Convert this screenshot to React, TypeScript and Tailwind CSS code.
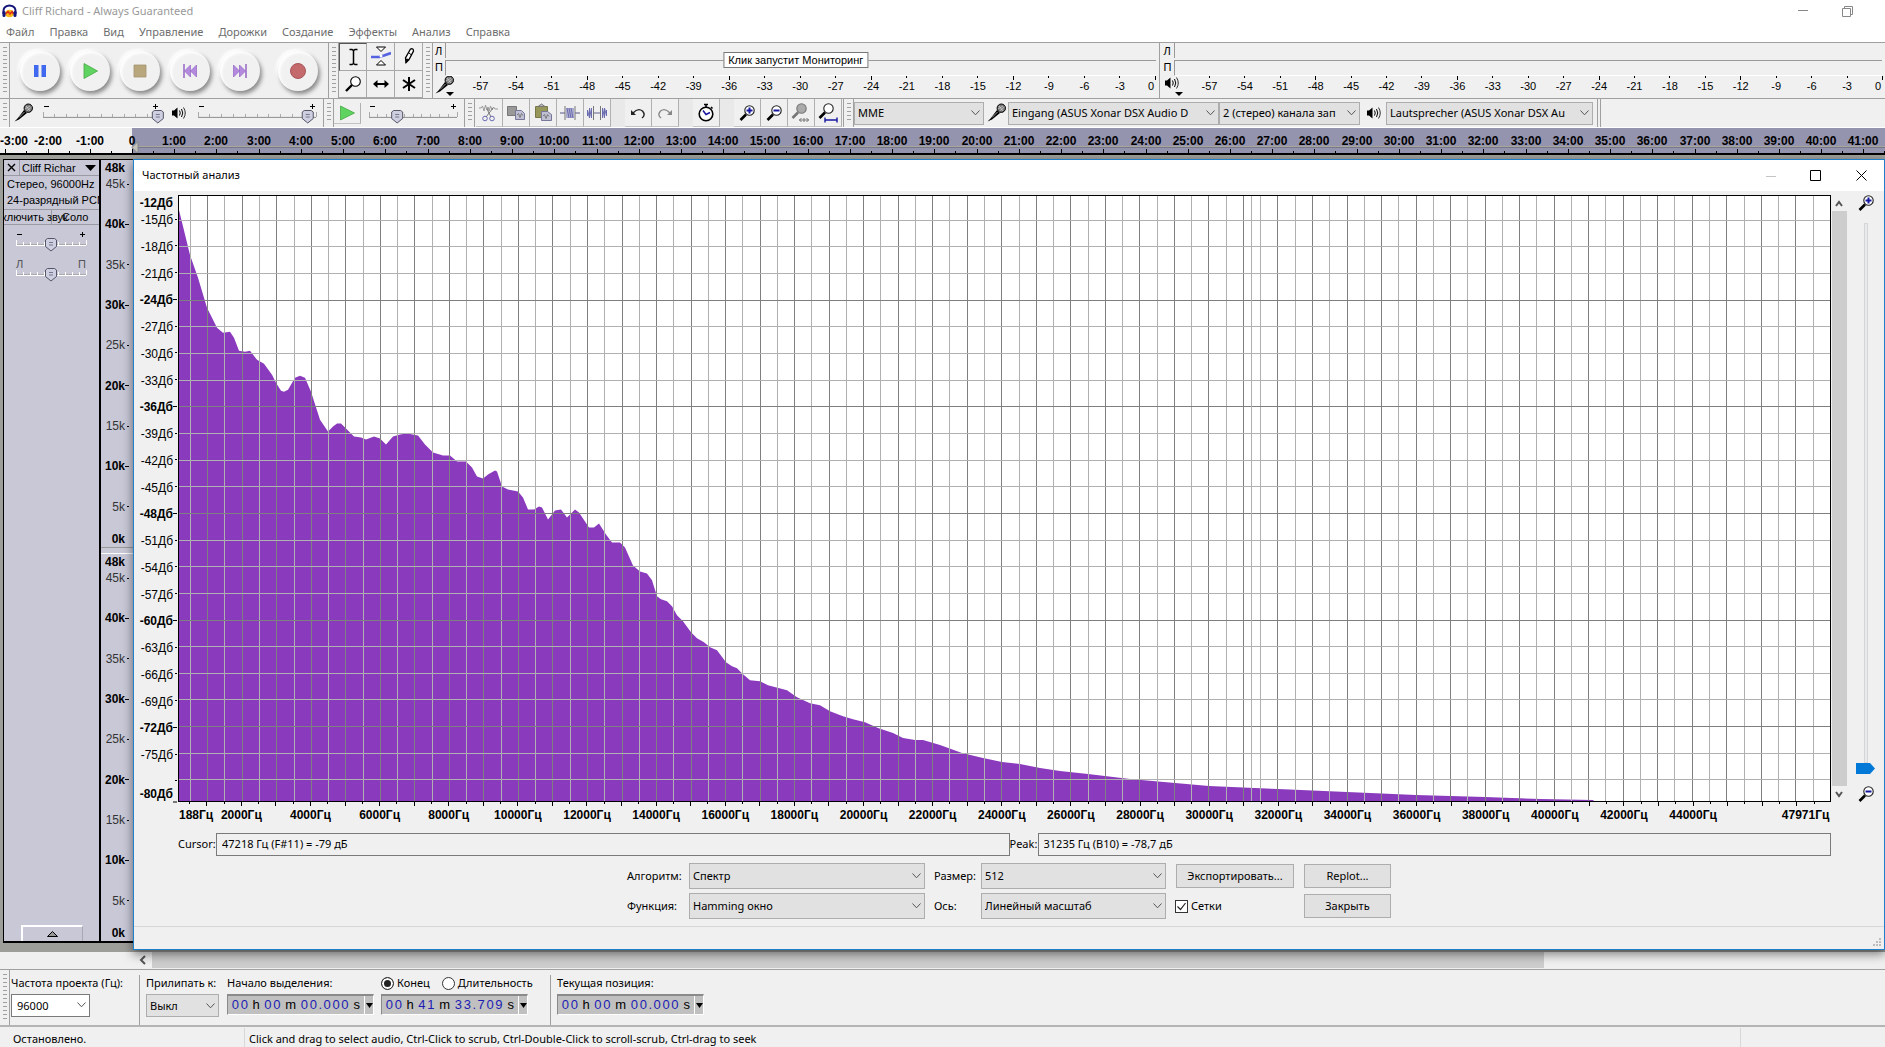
import React from "react";
import type { ReactNode } from "react";
import clsx from "clsx";

const FREQ_MIN = 168;
const FREQ_MAX = 47990;
const DB_TOP = -12.28;
const DB_RANGE = 68.09;

const freqPos = (f: number) =>
  `${(((f - FREQ_MIN) / (FREQ_MAX - FREQ_MIN)) * 100).toFixed(3)}%`;
const dbPos = (d: number) => `${(((DB_TOP - d) / DB_RANGE) * 100).toFixed(3)}%`;

const range = (from: number, to: number, step: number) => {
  const out: number[] = [];
  for (let v = from; v <= to; v += step) out.push(v);
  return out;
};

// Spectrum outline on a 1651 x 606 plot
const spectrum =
  "0,14 11,59 19,82 28,112 38,132 44,137 51,136 55,142 60,155 66,156 71,155 78,164 85,168 93,179 97,187 102,195 105,196 109,194 116,182 121,180 126,182 132,196 141,224 149,236 154,231 158,228 162,228 168,234 175,241 182,242 187,244 195,241 201,243 207,249 214,241 221,239 228,238 239,240 246,249 254,257 264,260 271,260 278,266 287,266 293,272 298,281 304,283 309,279 316,275 318,276 323,291 329,294 339,296 344,302 349,314 355,314 360,311 363,312 369,324 376,315 382,314 388,322 396,314 400,317 406,326 410,332 415,332 420,328 427,339 433,347 441,347 446,352 454,370 461,376 468,378 473,385 478,401 482,404 488,406 493,411 498,420 504,426 512,437 518,443 525,447 531,452 538,455 547,467 553,471 558,473 564,479 571,485 581,486 589,490 608,495 618,502 631,508 641,510 651,516 664,521 674,524 686,527 699,533 714,538 724,543 736,545 744,545 761,550 783,558 804,563 823,567 841,569 861,573 881,576 909,579 951,584 1030,591 1099,594 1168,597 1237,600 1306,602 1362,604 1414,605 1415,606";

const menuItems = [
  "Файл",
  "Правка",
  "Вид",
  "Управление",
  "Дорожки",
  "Создание",
  "Эффекты",
  "Анализ",
  "Справка",
];

const Grabber = () => (
  <div className="flex w-2.5 shrink-0 border-r border-[#a0a0a0] bg-[#f0f0f0] py-1 pl-[3px]">
    <div className="w-1 bg-[repeating-linear-gradient(#a0a0a0_0_1px,transparent_1px_4px)]" />
  </div>
);

const MicIcon = () => (
  <svg width="20" height="20" viewBox="0 0 20 20" className="shrink-0">
    <path d="M0.5 18.5 L3.5 15.5 L10 7 L13 10 L5 16.5 Z" fill="#000" />
    <path d="M5 14.5 L10.5 9" stroke="#999" strokeWidth="1" />
    <circle cx="14.3" cy="5.2" r="4.2" fill="#777" stroke="#000" />
    <path d="M11 6 l5 -3 M12.5 8 l5 -4 M12 3 l4 5" stroke="#ddd" strokeWidth="0.7" />
  </svg>
);

const SpeakerIcon = () => (
  <svg width="16" height="16" viewBox="0 0 16 16" className="shrink-0">
    <path d="M1 5.5 H3 L6.5 2.5 V13.5 L3 10.5 H1 Z" fill="#000" />
    <g fill="none" stroke="#000">
      <path d="M8.5 5.5 Q10 8 8.5 10.5" />
      <path d="M10.5 4 Q13 8 10.5 12" />
      <path d="M12.5 2.5 Q16 8 12.5 13.5" strokeWidth="0.8" />
    </g>
  </svg>
);

const ZoomGlyph = ({ sign, muted }: { sign?: "+" | "-"; muted?: boolean }) => (
  <g>
    <path d="M1.5 15 L7 9.5" stroke={muted ? "#777" : "#000"} strokeWidth="2.6" />
    <circle
      cx="10.5"
      cy="5.5"
      r="4.7"
      fill={muted ? "#aaa" : "#fff"}
      stroke={muted ? "#777" : "#222"}
      strokeWidth="1.1"
    />
    {sign && <path d="M7.5 5.5 H13.5" stroke="#1717a0" strokeWidth="2" />}
    {sign === "+" && <path d="M10.5 2.5 V8.5" stroke="#1717a0" strokeWidth="2" />}
  </g>
);

type SliderProps = {
  label: string;
  value: number;
  left?: string;
  right?: string;
  light?: boolean;
  className: string;
};

const Slider = ({ label, value, left, right, light, className }: SliderProps) => (
  <label className={clsx("relative block h-6 shrink-0", className)}>
    <svg className="block h-full w-full overflow-visible" shapeRendering="crispEdges">
      {left ? (
        <text x="0" y="9" className="fill-[#555] text-[11px]">
          {left}
        </text>
      ) : (
        <path d="M1 5.5 h5" stroke="#000" />
      )}
      {right ? (
        <text x="100%" y="9" textAnchor="end" className="fill-[#555] text-[11px]">
          {right}
        </text>
      ) : (
        <svg x="100%" className="overflow-visible">
          <path d="M-6 5.5 h5 M-3.5 3 v5" stroke="#000" />
        </svg>
      )}
      <line x1="0" x2="100%" y1="16.5" y2="16.5" stroke={light ? "#fff" : "#999"} />
      <line x1="0" x2="100%" y1="15.5" y2="15.5" stroke={light ? "#aaa" : "#e4e4e4"} />
      {range(0, 100, 10).map((t) => (
        <line
          key={t}
          x1={`${t}%`}
          x2={`${t}%`}
          y1={t % 100 ? 13 : 11}
          y2="16"
          stroke={light ? "#fff" : "#aaa"}
        />
      ))}
      <svg x={`${value}%`} className="overflow-visible" shapeRendering="auto">
        <path
          d="M-5.5 11 L-3.5 9.5 H3.5 L5.5 11 V17.5 L0 22 L-5.5 17.5 Z"
          fill="#cfcfe2"
          stroke="#555566"
        />
        <path d="M-2 13.5 h4 M-2 16 h4" stroke="#77778c" />
      </svg>
    </svg>
    <input
      type="range"
      aria-label={label}
      defaultValue={value}
      className="absolute inset-0 w-full opacity-0"
    />
  </label>
);

type SelectProps = {
  id?: string;
  label?: string;
  value: string;
  className?: string;
};

const Select = ({ id, label, value, className }: SelectProps) => (
  <div className={clsx("relative flex shrink-0", className)}>
    <select
      id={id}
      aria-label={label}
      className="w-full appearance-none truncate border border-[#adadad] bg-[#e1e1e1] pr-5 pl-[3px] text-black"
    >
      <option>{value}</option>
    </select>
    <svg
      width="9"
      height="6"
      className="pointer-events-none absolute top-1/2 right-1 -translate-y-1/2"
    >
      <path d="M0.5 0.5 L4.5 4.8 L8.5 0.5" fill="none" stroke="#555" />
    </svg>
  </div>
);

const RoundButton = ({ label, children }: { label: string; children: ReactNode }) => (
  <button aria-label={label} className="flex w-[50px] items-center justify-center">
    <span className="flex size-10 items-center justify-center rounded-full bg-[#f1f1f1] shadow-[2px_3px_4px_#8a8a8a,-2px_-2px_3px_#fff,inset_2px_2px_3px_#fff]">
      <svg width="18" height="18" viewBox="0 0 18 18">
        {children}
      </svg>
    </span>
  </button>
);

const ToolButton = ({
  label,
  children,
  pressed,
}: {
  label: string;
  children: ReactNode;
  pressed?: boolean;
}) => (
  <button
    aria-label={label}
    className={clsx(
      "flex items-center justify-center border-r border-b border-[#a8a8a8]",
      pressed && "border-t border-l border-t-[#555] border-l-[#555]"
    )}
  >
    <svg width="20" height="20" viewBox="0 0 20 20" fill="none">
      {children}
    </svg>
  </button>
);

const EditButton = ({ label, children }: { label: string; children: ReactNode }) => (
  <button
    aria-label={label}
    className="flex w-[27px] items-center justify-center border-r border-b border-[#b0b0b0] border-b-[#c4c4c4]"
  >
    <svg width="20" height="20" viewBox="0 0 20 20" fill="none">
      {children}
    </svg>
  </button>
);

const Transport = () => (
  <div className="flex shrink-0 border-r border-[#a0a0a0] px-[5px]">
    <RoundButton label="Пауза">
      <path d="M3 3 h4.5 v12 H3 Z M10.5 3 H15 v12 h-4.5 Z" fill="#4169f0" />
    </RoundButton>
    <RoundButton label="Воспроизвести">
      <path d="M3 1.5 L16.5 9 L3 16.5 Z" fill="#5fd35f" stroke="#46a846" strokeWidth="0.8" />
    </RoundButton>
    <RoundButton label="Стоп">
      <path d="M3 3 H15 V15 H3 Z" fill="#b8a67c" stroke="#a3946f" strokeWidth="0.8" />
    </RoundButton>
    <RoundButton label="В начало">
      <path d="M3 2 V16" stroke="#8e5cc0" strokeWidth="1.4" />
      <path
        d="M9.5 3 V15 L3.5 9 Z M15.5 3 V15 L9.5 9 Z"
        fill="#b48ade"
        stroke="#9465c4"
        strokeWidth="0.7"
      />
    </RoundButton>
    <RoundButton label="В конец">
      <path d="M15 2 V16" stroke="#8e5cc0" strokeWidth="1.4" />
      <path
        d="M2.5 3 V15 L8.5 9 Z M8.5 3 V15 L14.5 9 Z"
        fill="#b48ade"
        stroke="#9465c4"
        strokeWidth="0.7"
      />
    </RoundButton>
    <div className="w-2" />
    <RoundButton label="Запись">
      <circle cx="9" cy="9" r="7.5" fill="#c4696c" stroke="#a85558" />
    </RoundButton>
  </div>
);

const Tools = () => (
  <div className="grid w-[84px] shrink-0 grid-cols-3 grid-rows-2">
    <ToolButton label="Выделение" pressed>
      <path
        d="M6.5 2.5 H9 L10.5 3.5 L12 2.5 H14.5 M10.5 3.5 V16.5 M6.5 17.5 H9 L10.5 16.5 L12 17.5 H14.5"
        stroke="#000"
        strokeWidth="1.5"
      />
    </ToolButton>
    <ToolButton label="Изменение огибающей">
      <path d="M5.5 1 H14.5 L10 5.5 Z M5.5 19 H14.5 L10 14.5 Z" fill="#fff" stroke="#000" />
      <path d="M0 11 H8 L13 9.5 L20 7" stroke="#5563e0" strokeWidth="2.6" />
      <circle cx="10" cy="10" r="1.5" fill="#fff" />
    </ToolButton>
    <ToolButton label="Рисование">
      <path
        d="M7 16.5 L6.5 12 L11.5 3 Q14.5 2 14.5 5 L10 13.5 Z"
        fill="#fff"
        stroke="#000"
        strokeWidth="1.3"
      />
      <path d="M7 16.5 L7.5 13 L9.5 13.5 Z M10 7 L12.5 9" fill="#000" stroke="#000" />
    </ToolButton>
    <ToolButton label="Масштабирование">
      <path d="M3 17 L9 11" stroke="#000" strokeWidth="2.4" />
      <circle cx="12.5" cy="7.5" r="4.8" fill="#fff" stroke="#000" strokeWidth="1.1" />
    </ToolButton>
    <ToolButton label="Перемещение">
      <path d="M4 10 H16" stroke="#000" strokeWidth="2" />
      <path d="M2 10 L6.5 6 V14 Z M18 10 L13.5 6 V14 Z" fill="#000" />
    </ToolButton>
    <ToolButton label="Многоинструментальный режим">
      <path d="M10 3 V17 M4 6 L16 14 M16 6 L4 14" stroke="#000" strokeWidth="2" />
    </ToolButton>
  </div>
);

const Meter = ({ playback, tip }: { playback?: boolean; tip?: string }) => (
  <div
    className={clsx(
      "relative flex flex-1 pr-[3px] text-[11px]",
      playback && "border-l border-[#a0a0a0]"
    )}
  >
    <div className={clsx("shrink-0 leading-4", playback ? "w-3.5 pl-1" : "w-3 pl-0.5")}>
      <div>Л</div>
      <div>П</div>
      <div className="flex">{playback ? <SpeakerIcon /> : <MicIcon />}</div>
    </div>
    <div className="flex flex-1 flex-col">
      <div className="h-[15px] border-l border-[#999]" />
      <div className="mt-0.5 h-4 border-t border-b border-l border-[#999] border-b-white" />
      <svg className="h-[22px] w-full overflow-visible">
        <path d="M1 16 h8 l-4 4 Z" fill="#000" />
        {range(1, 20, 1).map((i) => (
          <g key={i}>
            <line
              x1={`${i * 5}%`}
              x2={`${i * 5}%`}
              y1="0"
              y2={i % 4 ? 2 : 4}
              stroke="#000"
              shapeRendering="crispEdges"
            />
            <text
              x={i === 20 ? "99.8%" : `${i * 5}%`}
              y="14"
              textAnchor={i === 20 ? "end" : "middle"}
              className="text-[11px]"
            >
              {i * 3 - 60}
            </text>
          </g>
        ))}
      </svg>
    </div>
    {tip && (
      <div
        role="tooltip"
        className="absolute top-[9px] left-1/2 -translate-x-1/2 border border-[#777] bg-white px-1 text-[11px] leading-[14px] whitespace-nowrap"
      >
        {tip}
      </div>
    )}
  </div>
);

const EditTools = () => (
  <div className="flex shrink-0 border-r border-[#a0a0a0] px-px">
    <EditButton label="Вырезать">
      <path
        d="M0 5 h2 l1.5 -2 1.5 5 1.5 -6 1.5 5 1 -3 1 4 1.5 -5 1.5 4 1.5 -3 1.5 2 h3"
        stroke="#999"
      />
      <path d="M14 5 L7 14 M8 6 L12 14" stroke="#777" />
      <circle cx="6" cy="15.5" r="2.3" stroke="#6b6bb0" />
      <circle cx="13" cy="15.5" r="2.3" stroke="#6b6bb0" />
    </EditButton>
    <EditButton label="Копировать">
      <path d="M1.5 3.5 h9 v9 h-9 Z" fill="#999" stroke="#777" />
      <path d="M9.5 7.5 h6 l3 3 v6 h-9 Z" fill="#c0c0d4" stroke="#77779a" />
      <path d="M11 12 l1.5 -1.5 1.5 4 1.5 -4 1.5 2" stroke="#777" />
    </EditButton>
    <EditButton label="Вставить">
      <path d="M2.5 3.5 h12 v11 h-12 Z" fill="#97975a" stroke="#77774a" />
      <path d="M5 3.5 L8.5 1 L12 3.5 Z" fill="#bbb" stroke="#777" />
      <path d="M8.5 8.5 h6 l4 3 v6 h-10 Z" fill="#c0c0d4" stroke="#77779a" />
      <path d="M10 13 l1.5 -1.5 1.5 4 1.5 -4 1.5 2" stroke="#777" />
    </EditButton>
    <EditButton label="Обрезать">
      <path d="M0 10 H5 M15 10 H20" stroke="#8888aa" strokeWidth="1.4" />
      <path d="M5 3 V17 M15 3 V17" stroke="#777" />
      <path d="M7 15 V5 L9 15 V5 L11 15 V5 L13 15 V5" stroke="#6b6bb0" />
    </EditButton>
    <EditButton label="Тишина">
      <path d="M7 10 H13" stroke="#8888aa" strokeWidth="1.4" />
      <path d="M6.5 3 V17 M13.5 3 V17" stroke="#777" />
      <path
        d="M0.5 13 V7 L2.5 15 V5 L4.5 15 V5 M15.5 15 V5 L17.5 15 V5 L19.5 13 V7"
        stroke="#6b6bb0"
      />
    </EditButton>
    <div className="w-3.5 bg-[#e9e9e9]" />
    <EditButton label="Отменить">
      <path d="M5 10 Q10 4.5 14.5 8 Q18 12 14 15" stroke="#222" strokeWidth="1.4" />
      <path d="M3 7 V12 H8 Z" fill="#222" />
    </EditButton>
    <EditButton label="Повторить">
      <path d="M15 10 Q10 4.5 5.5 8 Q2 12 6 15" stroke="#888" strokeWidth="1.4" />
      <path d="M17 7 V12 H12 Z" fill="#888" />
    </EditButton>
    <div className="w-3.5 bg-[#e9e9e9]" />
    <EditButton label="Синхронизация">
      <circle cx="10" cy="11" r="6.8" fill="#fff" stroke="#000" strokeWidth="1.6" />
      <path d="M8 1.5 H12 M10 1.5 V4 M15 4 L16.5 5.5" stroke="#000" strokeWidth="1.6" />
      <path d="M7 7.5 L10 11.5 L14 9.5" stroke="#1717a0" strokeWidth="1.5" />
    </EditButton>
    <div className="w-3.5 bg-[#e9e9e9]" />
    <EditButton label="Приблизить">
      <g transform="translate(2 2)">
        <ZoomGlyph sign="+" />
      </g>
    </EditButton>
    <EditButton label="Отдалить">
      <g transform="translate(2 2)">
        <ZoomGlyph sign="-" />
      </g>
    </EditButton>
    <EditButton label="По выделению">
      <ZoomGlyph muted />
      <path
        d="M8 17 h10 M10.5 15 l-2 2 2 2 M15.5 15 l2 2 -2 2 M13 15 v4"
        stroke="#777"
      />
    </EditButton>
    <EditButton label="По проекту">
      <ZoomGlyph />
      <path
        d="M7 17 H19 M7 14.5 V19.5 M19 14.5 V19.5"
        stroke="#1717a0"
        strokeWidth="1.4"
      />
    </EditButton>
  </div>
);

const Timeline = () => (
  <svg className="block h-[27px] w-full shrink-0 border-b-2 border-black bg-[#9494ae] font-bold">
    <rect width="132" height="27" fill="#f0f0f0" />
    <line x1="132" x2="100%" y1="18.5" y2="18.5" stroke="#a9a69c" />
    <line x1="132" x2="100%" y1="19.5" y2="19.5" stroke="#77778c" />
    {range(-3, 41, 1).map((m) => {
      const x = Math.round(132 + m * 42.23);
      return (
        <g key={m}>
          <path
            d={`M${x}.5 21 v4 M${x + 21}.5 23 v2`}
            stroke="#000"
            shapeRendering="crispEdges"
          />
          <text x={m === -3 ? 14 : x} y="17" textAnchor="middle" className="text-[12px]">
            {m === 0 ? "0" : `${m}:00`}
          </text>
        </g>
      );
    })}
    <path d="M132 19.5 l6 -6 v12 Z" fill="#c4c4bc" stroke="#888" />
  </svg>
);

const FreqRuler = () => (
  <div className="flex flex-1 bg-[#c8c8d7]">
    <svg className="w-full overflow-visible text-[12px]">
      {range(0, 45, 5)
        .concat(48)
        .map((k) => {
          const bold = k % 10 === 0 || k === 48;
          const edge = k === 48 ? 12 : k === 0 ? -4 : 4;
          const y = `${((48 - k) / 48) * 100}%`;
          return (
            <g key={k}>
              <text
                x="24"
                y={y}
                dy={edge}
                textAnchor="end"
                className={bold ? "font-bold" : "fill-[#333]"}
              >
                {k}k
              </text>
              {k !== 48 && (
                <line
                  x1={bold ? 24 : 26}
                  x2="28"
                  y1={y}
                  y2={y}
                  stroke="#000"
                  shapeRendering="crispEdges"
                />
              )}
            </g>
          );
        })}
    </svg>
  </div>
);

const TrackPanel = () => (
  <div className="flex w-[98px] shrink-0 flex-col overflow-hidden border border-r-2 border-b-2 border-black bg-[#c8c8d7] text-[11px] leading-4">
    <div className="flex h-4 items-center border-b border-[#9a9aa5]">
      <button
        aria-label="Закрыть дорожку"
        className="flex h-full w-4 items-center justify-center border-r border-[#9a9aa5]"
      >
        <svg width="9" height="9">
          <path d="M1 1 L8 8 M8 1 L1 8" stroke="#000" strokeWidth="1.4" />
        </svg>
      </button>
      <button className="flex flex-1 items-center justify-between pr-[3px] pl-0.5 whitespace-nowrap">
        Cliff Richar
        <svg width="11" height="6">
          <path d="M0 0 H11 L5.5 6 Z" fill="#000" />
        </svg>
      </button>
    </div>
    <div className="h-[33px] pl-[3px] whitespace-nowrap">
      <div>Стерео, 96000Hz</div>
      <div>24-разрядный PCM</div>
    </div>
    <div className="grid h-4 grid-cols-2 border-t border-b border-[#9a9aa5] leading-[14px] whitespace-nowrap">
      <button className="flex justify-center border-r border-[#9a9aa5]">
        <span>Выключить звук</span>
      </button>
      <button className="flex justify-center">Соло</button>
    </div>
    <Slider label="Громкость" value={50} light className="mr-[13px] ml-3 mt-1" />
    <Slider
      label="Панорама"
      value={50}
      left="Л"
      right="П"
      light
      className="mt-1.5 mr-[13px] ml-3"
    />
    <button
      aria-label="Свернуть"
      className="mx-auto mt-auto flex h-4 w-[62px] items-center justify-center border-t-2 border-r border-l-2 border-[#a8a8b4] border-t-white border-l-white"
    >
      <svg width="11" height="6">
        <path d="M0.5 5.5 H10.5 L5.5 0.5 Z" fill="#999" stroke="#000" />
      </svg>
    </button>
  </div>
);

const Plot = () => (
  <div className="grid min-h-0 flex-1 grid-cols-[44px_1fr] grid-rows-[1fr_31px] text-[12px]">
    <div className="flex">
      <svg className="w-full overflow-visible">
        {range(-78, -12, 3).map((d) => {
          const bold = d % 12 === 0;
          return (
            <g key={d}>
              {d !== -78 && (
                <text
                  x="39"
                  y={dbPos(d)}
                  dy={d === -12 ? 14 : 5}
                  textAnchor="end"
                  className={bold ? "font-bold" : undefined}
                >
                  {d}Дб
                </text>
              )}
              {d !== -12 && (
                <line
                  x1={bold ? 39 : 41}
                  x2="43"
                  y1={dbPos(d)}
                  y2={dbPos(d)}
                  stroke="#000"
                  shapeRendering="crispEdges"
                />
              )}
            </g>
          );
        })}
        <text x="39" y={dbPos(-80)} dy="-1" textAnchor="end" className="font-bold">
          -80Дб
        </text>
        <line x1="39" x2="43" y1="100%" y2="100%" stroke="#000" />
      </svg>
    </div>
    <div className="flex border border-black bg-white">
      <svg className="w-full">
        <svg
          width="100%"
          height="100%"
          viewBox="0 0 1651 606"
          preserveAspectRatio="none"
        >
          <polygon points={`0,606 ${spectrum}`} fill="#8a3abd" />
        </svg>
        <g shapeRendering="crispEdges">
          {range(500, 47500, 500).map((f) => (
            <line
              key={f}
              x1={freqPos(f)}
              x2={freqPos(f)}
              y1="0"
              y2="100%"
              stroke={f % 1000 ? "#b0b0b0" : "#7f7f7f"}
            />
          ))}
          {range(-78, -15, 3).map((d) => (
            <line
              key={d}
              x1="0"
              x2="100%"
              y1={dbPos(d)}
              y2={dbPos(d)}
              stroke={d % 12 ? "#b0b0b0" : "#7f7f7f"}
            />
          ))}
          {/* peak marker */}
          <line
            x1={freqPos(31235)}
            x2={freqPos(31235)}
            y1="0"
            y2="100%"
            stroke="#b0b0b0"
          />
        </g>
      </svg>
    </div>
    <svg className="col-start-2 h-full w-full overflow-visible font-bold">
      {range(500, 47500, 500).map((f) => (
        <line
          key={f}
          x1={freqPos(f)}
          x2={freqPos(f)}
          y1="0"
          y2={f % 1000 ? 2 : 4}
          stroke="#000"
          shapeRendering="crispEdges"
        />
      ))}
      <text x="1" y="17">
        188Гц
      </text>
      {range(2000, 44000, 2000).map((f) => (
        <text key={f} x={freqPos(f)} y="17" textAnchor="middle">
          {f}Гц
        </text>
      ))}
      <text x="99.9%" y="17" textAnchor="end">
        47971Гц
      </text>
    </svg>
  </div>
);

const PlotScrollbar = () => (
  <div className="mb-[31px] flex w-4 shrink-0 flex-col items-center">
    <svg width="16" height="16">
      <path d="M5 11 L8 7 L11 11" fill="none" stroke="#555" strokeWidth="2" />
    </svg>
    <div className="w-[15px] flex-1 bg-[#cdcdcd]" />
    <svg width="16" height="16">
      <path d="M5 6 L8 10 L11 6" fill="none" stroke="#555" strokeWidth="2" />
    </svg>
  </div>
);

const VerticalZoom = () => (
  <div className="mb-[31px] flex w-[37px] shrink-0 flex-col items-center">
    <svg width="16" height="16">
      <ZoomGlyph sign="+" />
    </svg>
    <label className="relative my-3 flex w-5 flex-1 flex-col items-center">
      <span className="w-1 flex-1 border border-[#d6d6d6] bg-[#e7eaea]" />
      <svg width="19" height="11">
        <path d="M0 0 H14 L19 5.5 L14 11 H0 Z" fill="#0078d7" />
      </svg>
      <input
        type="range"
        aria-label="Вертикальный масштаб"
        className="absolute inset-0 h-full w-full opacity-0"
      />
    </label>
    <svg width="16" height="16">
      <ZoomGlyph sign="-" />
    </svg>
  </div>
);

const dialogButton = "ml-2.5 h-6 border border-[#adadad] bg-[#e1e1e1]";

const FrequencyDialog = () => (
  <div
    role="dialog"
    aria-label="Частотный анализ"
    className="absolute top-1 right-0 bottom-0.5 left-[133px] flex flex-col border border-[#1e7fcb] bg-[#f0f0f0] font-['Noto_Sans',sans-serif] text-[11px] shadow-[0_4px_10px_rgba(0,0,0,0.5)]"
  >
    <div className="flex h-[31px] shrink-0 items-center bg-white pl-2">
      <span className="flex-1">Частотный анализ</span>
      <button
        aria-label="Свернуть"
        className="flex h-full w-[45px] items-center justify-center"
      >
        <svg width="10" height="10">
          <path d="M0 5.5 H10" stroke="#c4c4c4" />
        </svg>
      </button>
      <button
        aria-label="Развернуть"
        className="flex h-full w-[45px] items-center justify-center"
      >
        <svg width="11" height="11">
          <path d="M0.5 0.5 H10.5 V10.5 H0.5 Z" fill="none" stroke="#000" />
        </svg>
      </button>
      <button
        aria-label="Закрыть окно"
        className="flex h-full w-[46px] items-center justify-center"
      >
        <svg width="11" height="11">
          <path d="M0.5 0.5 L10.5 10.5 M10.5 0.5 L0.5 10.5" stroke="#000" />
        </svg>
      </button>
    </div>
    <div className="flex min-h-0 flex-1 pt-1 font-['Liberation_Sans',sans-serif]">
      <Plot />
      <PlotScrollbar />
      <VerticalZoom />
    </div>
    <div className="mr-[53px] ml-[44px] flex h-[23px] shrink-0">
      <label htmlFor="cursor" className="w-[38px] shrink-0 leading-[22px]">
        Cursor:
      </label>
      <input
        id="cursor"
        readOnly
        defaultValue="47218 Гц (F#11) = -79 дБ"
        className="min-w-0 flex-1 border border-[#7a7a7a] px-[5px]"
      />
      <label htmlFor="peak" className="w-7 shrink-0 leading-[22px]">
        Peak:
      </label>
      <input
        id="peak"
        readOnly
        defaultValue="31235 Гц (B10) = -78,7 дБ"
        className="min-w-0 flex-1 border border-[#7a7a7a] px-[5px]"
      />
    </div>
    <div className="mt-[7px] mb-[7px] grid shrink-0 grid-cols-[62px_236px_56px_185px_128px_97px] items-center justify-center gap-y-1">
      <label htmlFor="algorithm">Алгоритм:</label>
      <Select id="algorithm" value="Спектр" className="h-[26px]" />
      <label htmlFor="size" className="pl-[9px]">
        Размер:
      </label>
      <Select id="size" value="512" className="h-[26px]" />
      <button className={dialogButton}>Экспортировать...</button>
      <button className={dialogButton}>Replot...</button>
      <label htmlFor="window">Функция:</label>
      <Select id="window" value="Hamming окно" className="h-[26px]" />
      <label htmlFor="axis" className="pl-[9px]">
        Ось:
      </label>
      <Select id="axis" value="Линейный масштаб" className="h-[26px]" />
      <label className="relative ml-[9px] flex items-center gap-[3px]">
        <input
          type="checkbox"
          defaultChecked
          className="size-[13px] appearance-none border border-[#333] bg-white"
        />
        <svg width="13" height="13" className="pointer-events-none absolute left-0">
          <path
            d="M2.5 6.5 L5.5 9.5 L10.5 3"
            fill="none"
            stroke="#222"
            strokeWidth="1.2"
          />
        </svg>
        Сетки
      </label>
      <button className={dialogButton}>Закрыть</button>
    </div>
    <div className="flex h-[23px] shrink-0 items-end justify-end border-t border-[#d7d7d7] p-0.5">
      <svg width="9" height="9" fill="#bcbcbc">
        <path d="M6 0h2v2h-2z M3 3h2v2h-2z M6 3h2v2h-2z M0 6h2v2h-2z M3 6h2v2h-2z M6 6h2v2h-2z" />
      </svg>
    </div>
  </div>
);

const TimeField = ({ label, value }: { label: string; value: string }) => (
  <div
    role="group"
    aria-label={label}
    className="flex h-[21px] w-[147px] items-center border border-t-2 border-[#8a8a8a] border-r-white border-b-white bg-[#c0c0c0] pl-[3px] font-['Liberation_Sans',sans-serif] text-[13px]"
  >
    {value.split("").map((c, i) => (
      <span
        key={i}
        className={clsx(
          "text-center",
          /\d/.test(c) && "w-[9px] text-[#1c1cb4]",
          c === "." && "w-[5px] text-[#1c1cb4]",
          /[hs]/.test(c) && "w-[15px]",
          c === "m" && "w-[19px]"
        )}
      >
        {c}
      </span>
    ))}
    <button
      aria-label="Формат времени"
      className="ml-auto flex h-full w-[9px] items-center justify-center border-l border-white"
    >
      <svg width="7" height="5">
        <path d="M0 0 H7 L3.5 5 Z" fill="#000" />
      </svg>
    </button>
  </div>
);

const SelectionBar = () => (
  <div className="flex h-14 shrink-0 border-t border-[#a0a0a0] leading-4">
    <Grabber />
    <div className="flex gap-[6px] pt-[5px]">
      <div className="flex w-[130px] flex-col gap-[3px] border-r border-[#a0a0a0] pl-px whitespace-nowrap">
        <label htmlFor="rate">Частота проекта (Гц):</label>
        <div className="relative flex h-[23px] w-[79px]">
          <input
            id="rate"
            defaultValue="96000"
            className="w-full border border-[#7a7a7a] bg-white px-[5px]"
          />
          <svg
            width="9"
            height="6"
            className="pointer-events-none absolute top-2 right-1"
          >
            <path d="M0.5 0.5 L4.5 4.8 L8.5 0.5" fill="none" stroke="#555" />
          </svg>
        </div>
      </div>
      <div className="flex w-[75px] flex-col gap-[3px] whitespace-nowrap">
        <label htmlFor="snap">Прилипать к:</label>
        <Select id="snap" value="Выкл" className="h-[23px] w-[73px]" />
      </div>
      <div className="flex w-[148px] flex-col gap-[3px]">
        <span>Начало выделения:</span>
        <TimeField label="Начало выделения" value="00h00m00.000s" />
      </div>
      <div className="flex w-[170px] flex-col gap-[3px] border-r border-[#a0a0a0]">
        <div className="flex gap-3">
          {["Конец", "Длительность"].map((name, i) => (
            <label key={name} className="flex items-center gap-[3px]">
              <input
                type="radio"
                name="selection-mode"
                defaultChecked={i === 0}
                className="size-[13px] appearance-none rounded-full border border-[#333] bg-white checked:bg-[#222] checked:shadow-[inset_0_0_0_2px_#fff]"
              />
              {name}
            </label>
          ))}
        </div>
        <TimeField label="Конец выделения" value="00h41m33.709s" />
      </div>
      <div className="flex flex-col gap-[3px]">
        <span>Текущая позиция:</span>
        <TimeField label="Текущая позиция" value="00h00m00.000s" />
      </div>
    </div>
  </div>
);

export default function App() {
  return (
    <div className="flex min-h-screen flex-col overflow-hidden bg-[#f0f0f0] font-['Noto_Sans',sans-serif] text-[11px] text-black">
      <header className="shrink-0 bg-white">
        <div className="flex h-[22px] items-center pl-0.5 text-[#999]">
          <svg width="15" height="15" viewBox="0 0 15 15">
            <path
              d="M1.5 10 Q0.5 1.5 7.5 1.5 Q14.5 1.5 13.5 10"
              fill="none"
              stroke="#14147a"
              strokeWidth="2"
            />
            <ellipse cx="7.5" cy="9.5" rx="4.5" ry="3.8" fill="#f7b818" />
            <path
              d="M3.5 10 L6 7.5 L8 10 L10 7.5 L11.5 10"
              fill="none"
              stroke="#e02a1a"
              strokeWidth="1.5"
            />
            <rect x="0.5" y="7" width="3" height="6" rx="1.5" fill="#14147a" />
            <rect x="11.5" y="7" width="3" height="6" rx="1.5" fill="#14147a" />
          </svg>
          <span className="flex-1 pl-[5px]">Cliff Richard - Always Guaranteed</span>
          <button aria-label="Свернуть окно" className="flex w-[45px] justify-center">
            <svg width="10" height="10">
              <path d="M0 4.5 H10" stroke="#888" />
            </svg>
          </button>
          <button aria-label="Восстановить окно" className="flex w-[60px] pl-[17px]">
            <svg width="11" height="11" fill="none" stroke="#888">
              <path d="M0.5 2.5 H8.5 V10.5 H0.5 Z M2.5 2.5 V0.5 H10.5 V8.5 H8.5" />
            </svg>
          </button>
        </div>
        <nav className="flex h-5 items-center gap-[15px] pl-1.5 text-[#6d6d6d]">
          {menuItems.map((item) => (
            <button key={item}>{item}</button>
          ))}
        </nav>
      </header>

      <div className="flex h-14 shrink-0 border-t border-[#a0a0a0] font-['Liberation_Sans',sans-serif]">
        <Grabber />
        <Transport />
        <Grabber />
        <Tools />
        <Grabber />
        <Meter tip="Клик запустит Мониторинг" />
        <Meter playback />
      </div>

      <div className="flex h-[30px] shrink-0 border-t border-b border-[#a0a0a0] border-b-white">
        <Grabber />
        <div className="flex shrink-0 items-center border-r border-[#a0a0a0] pr-[7px] pl-1">
          <MicIcon />
          <Slider label="Уровень записи" value={99} className="ml-[9px] w-[116px]" />
          <div className="w-3" />
          <SpeakerIcon />
          <Slider
            label="Уровень воспроизведения"
            value={93}
            className="ml-[11px] w-[118px]"
          />
        </div>
        <Grabber />
        <div className="flex shrink-0 items-center border-r border-[#a0a0a0] pr-[7px]">
          <EditButton label="Воспроизвести на скорости">
            <path
              d="M3.5 3 L17.5 10 L3.5 17 Z"
              fill="#5fd35f"
              stroke="#46a846"
              strokeWidth="0.8"
            />
          </EditButton>
          <Slider label="Скорость" value={32} className="ml-2 w-[88px]" />
        </div>
        <Grabber />
        <EditTools />
        <Grabber />
        <div className="flex items-center border-r-4 border-double border-[#a0a0a0] pr-1">
          <Select label="Хост" value="MME" className="h-[23px] w-[130px]" />
          <div className="w-[3px]" />
          <MicIcon />
          <Select
            label="Устройство записи"
            value="Eingang (ASUS Xonar DSX Audio D"
            className="ml-px h-[23px] w-[211px]"
          />
          <Select
            label="Каналы записи"
            value="2 (стерео) канала зап"
            className="h-[23px] w-[141px]"
          />
          <div className="w-1.5" />
          <SpeakerIcon />
          <Select
            label="Устройство воспроизведения"
            value="Lautsprecher (ASUS Xonar DSX Au"
            className="ml-1 h-[23px] w-[207px]"
          />
        </div>
      </div>

      <div className="flex shrink-0 font-['Liberation_Sans',sans-serif]">
        <Timeline />
      </div>

      <main className="relative flex min-h-[600px] flex-1 bg-[#9d9d9a] pt-1 pb-[9px] pl-[3px] font-['Liberation_Sans',sans-serif]">
        <TrackPanel />
        <div className="flex w-[33px] shrink-0 flex-col border-t border-b-2 border-black">
          <FreqRuler />
          <div className="h-[7px] border-t border-b border-[#999] border-b-white bg-[#c8c8d7]" />
          <FreqRuler />
        </div>
        <FrequencyDialog />
      </main>

      <div className="flex h-[17px] shrink-0 pl-[136px]">
        <svg width="16" height="16" className="shrink-0">
          <path d="M9 4 L5 8 L9 12" fill="none" stroke="#555" strokeWidth="2" />
        </svg>
        <div className="mb-px w-[79.6%] bg-[#cdcdcd]" />
      </div>

      <SelectionBar />

      <footer className="flex h-[22px] shrink-0 items-end border-t-2 border-[#b4b4b4] leading-4">
        <div className="h-[19px] w-[245px] border-r border-[#d7d7d7] pt-[3px] pl-[13px]">
          Остановлено.
        </div>
        <div className="h-[19px] flex-1 pt-[3px] pl-1">
          Click and drag to select audio, Ctrl-Click to scrub, Ctrl-Double-Click to
          scroll-scrub, Ctrl-drag to seek
        </div>
        <div className="h-[19px] w-[145px] border-l border-[#d7d7d7]" />
      </footer>
    </div>
  );
}
